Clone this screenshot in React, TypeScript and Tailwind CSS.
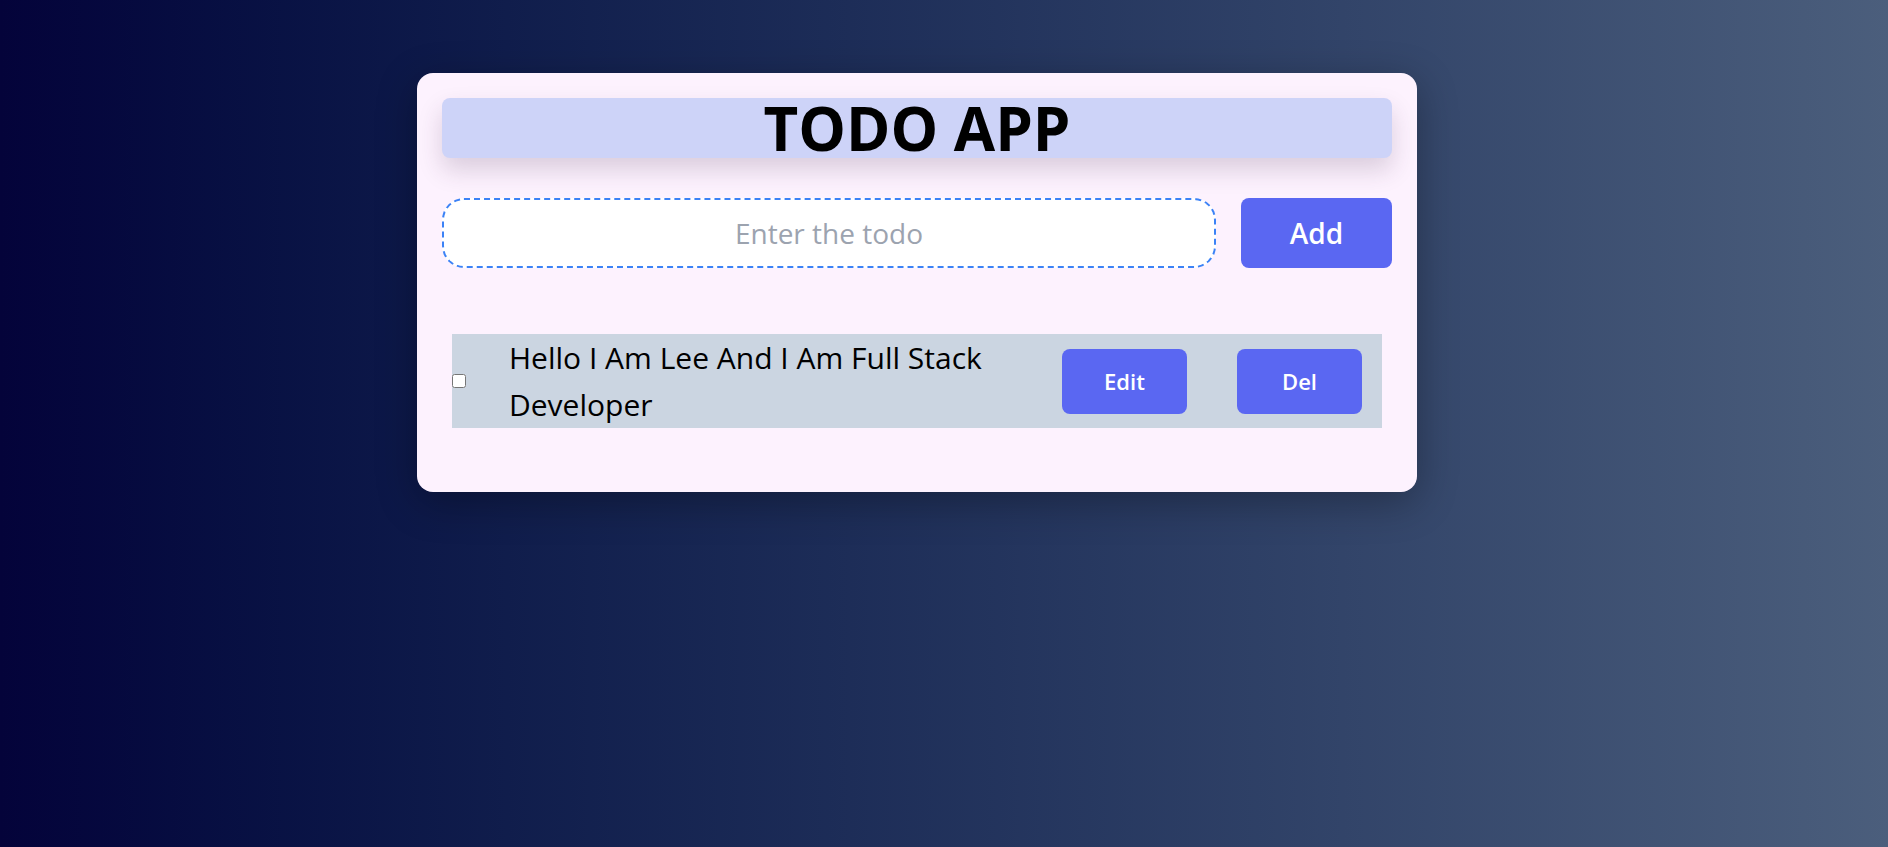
import { useState } from "react";

type Todo = {
  id: number;
  text: string;
  done: boolean;
};

export default function App() {
  const [todo, setTodo] = useState("");
  const [todos, setTodos] = useState<Todo[]>([
    { id: 1, text: "Hello I Am Lee And I Am Full Stack Developer", done: false },
  ]);

  const handleAdd = () => {
    if (!todo.trim()) return;
    setTodos([...todos, { id: Date.now(), text: todo, done: false }]);
    setTodo("");
  };

  const handleDelete = (id: number) => {
    setTodos(todos.filter((t) => t.id !== id));
  };

  const handleToggle = (id: number) => {
    setTodos(todos.map((t) => (t.id === id ? { ...t, done: !t.done } : t)));
  };

  return (
    <div className="min-h-[847px] w-full bg-gradient-to-r from-[#04033a] to-[#4b5e7c] pt-[73px] pl-[417px] font-['Open_Sans',sans-serif]">
      <div className="w-[1000px] rounded-2xl bg-[#fdf2fe] p-[25px] pb-[64px] shadow-[0_10px_40px_rgba(0,0,0,0.3)]">
        {/* heading */}
        <div className="flex h-[60px] items-center justify-center rounded-lg bg-[#cdd3f8] shadow-[0_12px_24px_rgba(60,40,70,0.18)]">
          <h1 className="text-[60px] leading-[60px] font-bold text-black">TODO APP</h1>
        </div>

        {/* input row */}
        <div className="mt-[40px] flex items-center gap-[25px]">
          <input
            type="text"
            value={todo}
            onChange={(e) => setTodo(e.target.value)}
            placeholder="Enter the todo"
            className="h-[70px] w-[774px] rounded-[22px] border-2 border-dashed border-[#3b82f6] bg-white text-center text-[28px] text-gray-700 outline-none placeholder:text-[#9ca3af]"
          />
          <button
            onClick={handleAdd}
            className="h-[70px] w-[151px] rounded-lg bg-[#5a67f2] text-[28px] font-semibold text-white"
          >
            Add
          </button>
        </div>

        {/* list */}
        <div className="mt-[66px] mx-[10px] flex flex-col gap-3">
          {todos.map((t) => (
            <div key={t.id} className="flex items-center bg-[#cbd5e1]">
              <input
                type="checkbox"
                checked={t.done}
                onChange={() => handleToggle(t.id)}
                className="m-0 h-[14px] w-[14px]"
              />
              <div
                className={`ml-[43px] w-[520px] text-[30px] leading-[47px] text-black ${
                  t.done ? "line-through" : ""
                }`}
              >
                {t.text}
              </div>
              <div className="ml-auto mr-[20px] flex gap-[50px]">
                <button className="h-[65px] w-[125px] rounded-lg bg-[#5a67f2] text-[22px] font-semibold text-white">
                  Edit
                </button>
                <button
                  onClick={() => handleDelete(t.id)}
                  className="h-[65px] w-[125px] rounded-lg bg-[#5a67f2] text-[22px] font-semibold text-white"
                >
                  Del
                </button>
              </div>
            </div>
          ))}
        </div>
      </div>
    </div>
  );
}
